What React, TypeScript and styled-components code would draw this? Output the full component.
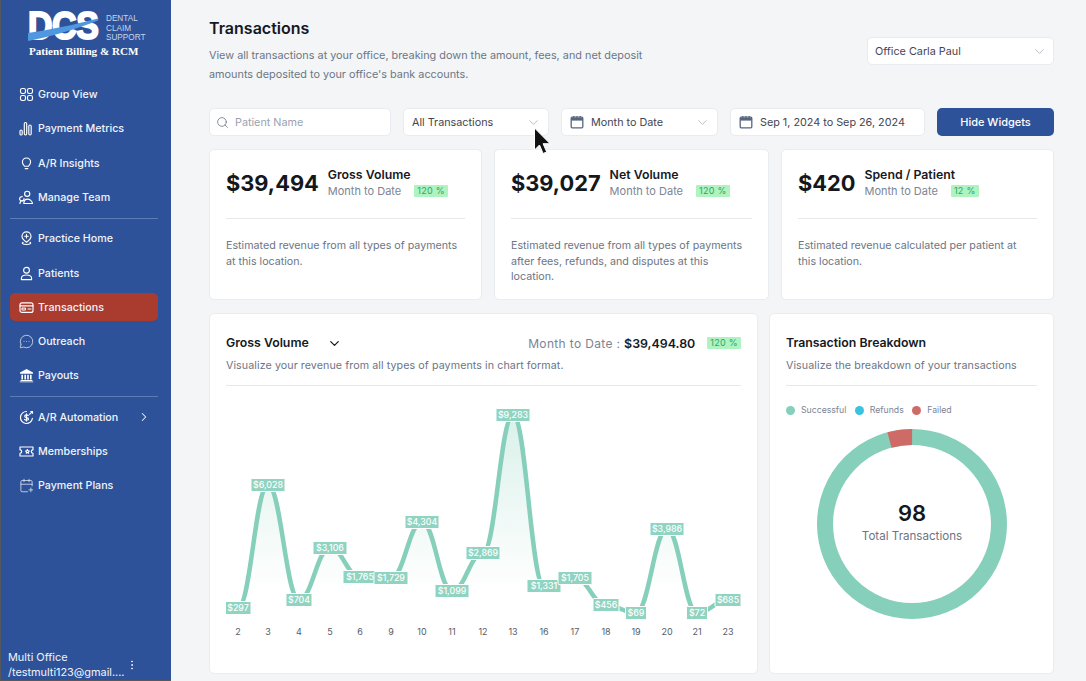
import React from 'react'
import styled, { createGlobalStyle } from 'styled-components'
import { Search, ChevronDown, ChevronRight, MessageCircleMore, CalendarPlus, EllipsisVertical } from 'lucide-react'

const GlobalStyle = createGlobalStyle`
  html, body {
    margin: 0;
    padding: 0;
    height: 681px;
    overflow: hidden;
    font-family: Inter, "Liberation Sans", sans-serif;
    background: #f3f5f7;
  }
  * { box-sizing: border-box; }
`

const Page = styled.div`
  display: flex;
  width: 1086px;
  height: 681px;
  overflow: hidden;
  position: relative;
`
const Sidebar = styled.aside`
  width: 171px;
  flex-shrink: 0;
  height: 681px;
  display: flex;
  flex-direction: column;
  background: #2d5299;
  border-left: 1px solid #55585e;
  border-bottom: 1px solid #55585e;
  color: #fff;
  overflow: hidden;
`
const LogoBlock = styled.div`
  height: 80.4px;
  padding: 11px 0 0 27px;
`
const LogoTop = styled.div`
  display: flex;
  align-items: flex-start;
  height: 30px;
  gap: 8px;
`
const LogoMark = styled.div`
  position: relative;
  width: 70px;
  height: 30px;
`
const LogoLetters = styled.span`
  display: block;
  font-family: 'Liberation Sans', sans-serif;
  font-weight: 700;
  font-size: 39px;
  line-height: 30px;
  letter-spacing: -0.5px;
  transform: scaleX(0.87);
  transform-origin: left center;
  -webkit-text-stroke: 2px #fff;
  color: #fff;
`
const LogoSwoosh = styled.svg`
  position: absolute;
  left: 0;
  top: 0;
`
const LogoSmall = styled.div`
  font-family: 'Liberation Sans', sans-serif;
  font-size: 8.2px;
  line-height: 9.6px;
  color: #c9d5ea;
  padding-top: 3px;
`
const LogoTagline = styled.div`
  font-family: 'Liberation Serif', serif;
  font-weight: 700;
  font-size: 11.1px;
  line-height: 14px;
  margin-top: 3px;
  margin-left: 1px;
  white-space: nowrap;
`
const Nav = styled.nav`
  display: flex;
  flex-direction: column;
  gap: 6px;
  padding: 0 13px 0 9px;
`
const NavItem = styled.a<{ $active?: boolean }>`
  display: flex;
  align-items: center;
  height: 28.3px;
  padding: 0 9px;
  gap: 4px;
  font-size: 10.7px;
  font-weight: 450;
  color: #f1f4fa;
  border-radius: 5px;
  background: ${(p) => (p.$active ? '#a93b2f' : 'transparent')};
  svg {
    flex-shrink: 0;
  }
`
const NavLabel = styled.span`
  flex: 1;
`
const NavArrow = styled.span`
  display: flex;
  margin-right: -2px;
`
const NavDivider = styled.div`
  height: 1px;
  background: #5d7cb5;
`
const SideFooter = styled.div`
  margin-top: auto;
  display: flex;
  align-items: center;
  padding: 2px 0 0 7px;
  height: 32px;
  font-size: 10.9px;
  line-height: 15px;
  color: #f1f4fa;
  gap: 0;
`
const FooterText = styled.div`
  width: 118px;
  white-space: nowrap;
`
const Main = styled.main`
  flex: 1;
  padding: 18px 32px 0 38px;
  background: #f3f5f7;
`
const Header = styled.header`
  display: flex;
  justify-content: space-between;
  align-items: flex-start;
`
const Title = styled.h1`
  margin: 0;
  font-size: 16px;
  line-height: 20px;
  font-weight: 600;
  color: #16191f;
`
const Description = styled.p`
  margin: 8px 0 0;
  font-size: 10.85px;
  line-height: 18.5px;
  color: #6c7585;
  width: 460px;
`
const Control = styled.div`
  display: flex;
  align-items: center;
  height: 28px;
  background: #fff;
  border: 1px solid #e8ebef;
  border-radius: 5px;
  padding: 0 7px 0 8px;
  font-size: 10.8px;
  color: #3f4652;
  gap: 7px;
  white-space: nowrap;
`
const OfficeSelect = styled(Control)`
  width: 187px;
  margin-top: 19px;
  padding: 0 6px 0 7px;
`
const SearchField = styled(Control)`
  padding-left: 6px;
  gap: 6px;
`
const ControlText = styled.span<{ $muted?: boolean }>`
  flex: 1;
  color: ${(p) => (p.$muted ? '#9ba2b0' : '#3f4652')};
`
const Toolbar = styled.div`
  display: grid;
  grid-template-columns: 182px 146px 157px 195px 117px;
  gap: 12px;
  margin-top: 25px;
`
const WidgetButton = styled.button`
  height: 28px;
  border: 0;
  border-radius: 5px;
  background: #2d5299;
  color: #fff;
  font: 500 11px Inter, sans-serif;
`
const StatGrid = styled.section`
  display: grid;
  grid-template-columns: 273px 275px 273px;
  gap: 12px;
  margin-top: 13px;
`
const Card = styled.div`
  background: #fff;
  border: 1px solid #e9ecf0;
  border-radius: 5px;
`
const StatCard = styled(Card)`
  height: 151px;
  padding: 0 16px;
`
const StatTop = styled.div`
  display: flex;
  align-items: center;
  gap: 9px;
  height: 69px;
  padding-bottom: 2px;
  border-bottom: 1px solid #e6e8ec;
`
const StatValue = styled.div`
  font-size: 21.8px;
  font-weight: 700;
  color: #14171c;
  line-height: 28px;
`
const StatInfo = styled.div`
  margin-top: -2px;
`
const StatLabel = styled.div`
  font-size: 12.3px;
  font-weight: 600;
  color: #16191f;
  line-height: 16px;
`
const StatMeta = styled.div`
  display: flex;
  align-items: center;
  gap: 13px;
  font-size: 11px;
  line-height: 14px;
  margin-top: 1px;
  color: #7c8494;
`
const Badge = styled.span`
  display: inline-block;
  background: #aef3c0;
  color: #2aa76a;
  font-size: 9px;
  line-height: 12px;
  height: 12px;
  padding: 0 3px;
  border-radius: 1px;
  letter-spacing: 0.3px;
`
const StatText = styled.p`
  margin: 19px 0 0;
  font-size: 10.7px;
  line-height: 15.7px;
  color: #6c7585;
`
const BottomGrid = styled.section`
  display: grid;
  grid-template-columns: 549px 285px;
  gap: 11px;
  margin-top: 13px;
`
const PanelCard = styled(Card)`
  height: 361px;
  padding: 20px 16px 0;
`
const PanelHead = styled.div`
  display: flex;
  align-items: center;
  height: 18px;
`
const PanelTitle = styled.h2`
  margin: 0;
  font-size: 12.3px;
  line-height: 18px;
  font-weight: 600;
  color: #16191f;
`
const TitleChevron = styled.span`
  display: flex;
  margin-left: 18px;
  color: #16191f;
`
const PanelRight = styled.div`
  margin-left: auto;
  display: flex;
  align-items: center;
  font-size: 12px;
  letter-spacing: 0.35px;
  color: #7c8494;
  gap: 12px;
`
const Total = styled.b`
  font-weight: 600;
  letter-spacing: 0;
  color: #16191f;
  font-size: 12.4px;
`
const PanelSub = styled.p`
  margin: 6px 0 0;
  padding-bottom: 12px;
  font-size: 10.7px;
  line-height: 15px;
  letter-spacing: 0.08px;
  color: #6c7585;
  border-bottom: 1px solid #e6e8ec;
`
const ChartSvg = styled.svg`
  display: block;
  margin-top: 4px;
`
const Legend = styled.div`
  display: flex;
  align-items: center;
  margin-top: 19px;
  font-size: 8.7px;
  line-height: 11px;
  color: #7c8494;
`
const LegendItem = styled.div`
  display: flex;
  align-items: center;
  gap: 6px;
  margin-right: 8.5px;
`
const LegendDot = styled.i<{ $color: string }>`
  display: block;
  width: 9px;
  height: 9px;
  border-radius: 50%;
  background: ${(p) => p.$color};
`
const DonutWrap = styled.div`
  position: relative;
  width: 190px;
  height: 190px;
  margin: 13px 0 0 31px;
`
const DonutCenter = styled.div`
  position: absolute;
  inset: 0;
  display: flex;
  flex-direction: column;
  align-items: center;
  justify-content: center;
  padding-bottom: 5px;
`
const DonutNumber = styled.div`
  font-size: 22px;
  font-weight: 600;
  line-height: 28px;
  color: #14171c;
`
const DonutLabel = styled.div`
  font-size: 11.6px;
  line-height: 16px;
  margin-top: 1px;
  color: #6c7585;
`
const Cursor = styled.svg`
  position: absolute;
  left: 533px;
  top: 127px;
`

const Ico: React.FC<{ children: React.ReactNode }> = ({ children }) => (
  <svg width="15" height="15" viewBox="0 0 15 15" fill="none" stroke="#fff" strokeWidth="1.15" strokeLinecap="round" strokeLinejoin="round">
    {children}
  </svg>
)

const GridIcon = () => (
  <Ico>
    <rect x="1.5" y="1.5" width="5" height="5" rx="1.7" />
    <rect x="8.5" y="1.5" width="5" height="5" rx="1.7" />
    <rect x="1.5" y="8.5" width="5" height="5" rx="1.7" />
    <rect x="8.5" y="8.5" width="5" height="5" rx="1.7" />
  </Ico>
)
const BarsIcon = () => (
  <Ico>
    <rect x="1" y="9" width="2.2" height="5" rx="1.1" />
    <rect x="5.3" y="1.5" width="2.4" height="12.5" rx="1.2" />
    <rect x="9.8" y="4" width="2.4" height="10" rx="1.2" />
  </Ico>
)
const BulbIcon = () => (
  <Ico>
    <path d="M5.4 10.2C4.4 9.2 3.4 8 3.4 6.1a4.1 4.1 0 0 1 8.2 0c0 1.9-1 3.1-2 4.1z" />
    <path d="M6.2 12.6h2.6" />
  </Ico>
)
const TeamIcon = () => (
  <Ico>
    <circle cx="8.2" cy="3.8" r="2.6" />
    <path d="M5 8.6a2.2 2.2 0 1 1-1.6-1.9" />
    <path d="M1 13.5c0-1.8 1-3 2.8-3M4.8 13.5c0-2.6 1.5-4.4 3.7-4.4s4.8 1.8 5 4.4z" />
  </Ico>
)
const PinIcon = () => (
  <Ico>
    <path d="M7.5 11.2C5 9.6 3 7.8 3 5.3a4.5 4.5 0 0 1 9 0c0 2.5-2 4.3-4.5 5.9z" />
    <path d="M7.5 3.4v3.6M5.7 5.2h3.6" />
    <path d="M4 11.4c-1.4.6-.8 2.1 3.5 2.1s4.9-1.5 3.5-2.1" />
  </Ico>
)
const PatientIcon = () => (
  <Ico>
    <circle cx="7.5" cy="4.2" r="2.9" />
    <path d="M2.4 13.6v-1.2c0-2 1.8-3.4 5.1-3.4s5.1 1.4 5.1 3.4v1.2z" />
  </Ico>
)
const CardIcon = () => (
  <Ico>
    <rect x="1" y="2.8" width="13" height="9.6" rx="2" />
    <path d="M1 5.8h13" />
    <rect x="3" y="8" width="3.4" height="2" rx=".5" />
    <path d="M9 9h3" />
  </Ico>
)
const BankIcon = () => (
  <svg width="15" height="15" viewBox="0 0 15 15" fill="#fff">
    <path d="M7.5 1 14 4.6v1.2H1V4.6z" />
    <path d="M2.4 6.8h1.6v4.6H2.4zM5.4 6.8H7v4.6H5.4zM8.2 6.8h1.6v4.6H8.2zM11 6.8h1.6v4.6H11z" />
    <path d="M1.6 12.1h11.8v1H1.6zM.8 13.4h13.4v.9H.8z" />
  </svg>
)
const DollarIcon = () => (
  <Ico>
    <path d="M13.4 8.4A6 6 0 1 1 7.5 1.5" />
    <path d="M9.3 5.6c-.5-.8-3.6-1.2-3.6.6s3.8 1 3.8 2.8-3.4 1.4-4 .4M7.5 3.9v7.2" />
    <path d="M10.6 4.4l2.8-2.9M11.8 1.5h1.7v1.7" />
  </Ico>
)
const TicketIcon = () => (
  <Ico>
    <path d="M1 3h13v2.8a1.7 1.7 0 0 0 0 3.4V12H1V9.2a1.7 1.7 0 0 0 0-3.4z" />
    <path d="M8.4 5.6l.6 1.2 1.3.2-.9.9.2 1.3-1.2-.6-1.1.6.2-1.3-.9-.9 1.2-.2z" />
  </Ico>
)

const CalendarIcon = () => (
  <svg width="14" height="14" viewBox="0 0 14 14" fill="none">
    <rect x="1.2" y="2.2" width="11.6" height="10.6" rx="1" stroke="#56667f" strokeWidth="1.3" />
    <path d="M1.2 3h11.6v2.6H1.2z" fill="#56667f" />
    <path d="M3.8 1v2.4M7 1v2.4M10.2 1v2.4" stroke="#56667f" strokeWidth="1.2" />
  </svg>
)

const Chevron = () => <ChevronDown size={15} color="#b3b9c4" strokeWidth={1.5} />

const navTop = [
  { label: 'Group View', icon: <GridIcon /> },
  { label: 'Payment Metrics', icon: <BarsIcon /> },
  { label: 'A/R Insights', icon: <BulbIcon /> },
  { label: 'Manage Team', icon: <TeamIcon /> },
]
const navMiddle = [
  { label: 'Practice Home', icon: <PinIcon /> },
  { label: 'Patients', icon: <PatientIcon /> },
  { label: 'Transactions', icon: <CardIcon />, active: true },
  { label: 'Outreach', icon: <MessageCircleMore size={15} strokeWidth={1.15} /> },
  { label: 'Payouts', icon: <BankIcon /> },
]
const navBottom = [
  { label: 'Memberships', icon: <TicketIcon /> },
  { label: 'Payment Plans', icon: <CalendarPlus size={15} strokeWidth={1.15} /> },
]

const stats = [
  {
    value: '$39,494',
    label: 'Gross Volume',
    badge: '120 %',
    text: 'Estimated revenue from all types of payments at this location.',
  },
  {
    value: '$39,027',
    label: 'Net Volume',
    badge: '120 %',
    text: 'Estimated revenue from all types of payments after fees, refunds, and disputes at this location.',
  },
  {
    value: '$420',
    label: 'Spend / Patient',
    badge: '12 %',
    text: 'Estimated revenue calculated per patient at this location.',
  },
]

// page coordinates, the svg viewBox below is offset to match
const points = [
  { d: '2', x: 238, y: 608, v: '$297' },
  { d: '3', x: 268, y: 485, v: '$6,028' },
  { d: '4', x: 299, y: 600, v: '$704' },
  { d: '5', x: 330, y: 548, v: '$3,106' },
  { d: '6', x: 360, y: 577, v: '$1,765' },
  { d: '9', x: 391, y: 578, v: '$1,729' },
  { d: '10', x: 422, y: 522, v: '$4,304' },
  { d: '11', x: 452, y: 591, v: '$1,099' },
  { d: '12', x: 483, y: 553, v: '$2,869' },
  { d: '13', x: 513, y: 415, v: '$9,283' },
  { d: '16', x: 544, y: 586, v: '$1,331' },
  { d: '17', x: 575, y: 578, v: '$1,705' },
  { d: '18', x: 606, y: 605, v: '$456' },
  { d: '19', x: 636, y: 613, v: '$69' },
  { d: '20', x: 667, y: 529, v: '$3,986' },
  { d: '21', x: 697, y: 613, v: '$72' },
  { d: '23', x: 728, y: 600, v: '$685' },
]

const linePath = () => {
  let d = `M${points[0].x} ${points[0].y}`
  for (let i = 1; i < points.length; i++) {
    const a = points[i - 1]
    const b = points[i]
    const mx = (b.x - a.x) * 0.42
    d += ` C${a.x + mx} ${a.y} ${b.x - mx} ${b.y} ${b.x} ${b.y}`
  }
  return d
}

const labelWidth = (v: string) => (v.length >= 6 ? 34 : v.length === 4 ? 26 : 21)

const RevenueChart = () => {
  const line = linePath()
  return (
    <ChartSvg width="516" height="250" viewBox="226 390 516 250">
      <defs>
        <linearGradient id="area" x1="0" y1="0" x2="0" y2="1">
          <stop offset="0" stopColor="#86cfbb" stopOpacity="0.3" />
          <stop offset="0.9" stopColor="#86cfbb" stopOpacity="0" />
        </linearGradient>
      </defs>
      <path d={`${line} L728 612 L238 612 Z`} fill="url(#area)" />
      <path d={line} fill="none" stroke="#86cfbb" strokeWidth="4.5" />
      {points.map((p) => {
        const w = labelWidth(p.v)
        return (
          <g key={p.d}>
            <rect x={p.x - w / 2} y={p.y - 6.5} width={w} height={13} rx="1" fill="#8fd3c1" stroke="#fff" strokeWidth="1" />
            <text x={p.x} y={p.y + 3.3} textAnchor="middle" fontSize="8.8" fontWeight="500" fontFamily="Inter, sans-serif" fill="#fff">
              {p.v}
            </text>
          </g>
        )
      })}
      {points.map((p) => (
        <text key={p.d} x={p.x} y={635} textAnchor="middle" fontSize="9" fontFamily="Inter, sans-serif" fill="#565c66">
          {p.d}
        </text>
      ))}
    </ChartSvg>
  )
}

const Donut = () => {
  const r = 87
  const c = 2 * Math.PI * r
  const failed = c * 0.042
  return (
    <svg width="190" height="190" viewBox="0 0 190 190">
      <circle cx="95" cy="95" r={r} fill="none" stroke="#86cfbb" strokeWidth="16" />
      <circle
        cx="95"
        cy="95"
        r={r}
        fill="none"
        stroke="#cf6b67"
        strokeWidth="16"
        strokeDasharray={`${failed} ${c - failed}`}
        transform={`rotate(${-90 - 15} 95 95)`}
      />
    </svg>
  )
}

const NavRow: React.FC<{ label: string; icon: React.ReactNode; active?: boolean; arrow?: boolean }> = ({ label, icon, active, arrow }) => (
  <NavItem $active={active}>
    {icon}
    <NavLabel>{label}</NavLabel>
    {arrow && (
      <NavArrow>
        <ChevronRight size={14} strokeWidth={1.8} />
      </NavArrow>
    )}
  </NavItem>
)

export default function App() {
  return (
    <Page>
      <GlobalStyle />
      <Sidebar>
        <LogoBlock>
          <LogoTop>
            <LogoMark>
              <LogoLetters>DCS</LogoLetters>
              <LogoSwoosh width="70" height="30" viewBox="0 0 70 30">
                <path d="M0 30C22 26 48 18 70 9.5V7.5C46 14 20 19 0 22z" fill="#4f97de" />
              </LogoSwoosh>
            </LogoMark>
            <LogoSmall>
              DENTAL
              <br />
              CLAIM
              <br />
              SUPPORT
            </LogoSmall>
          </LogoTop>
          <LogoTagline>Patient Billing &amp; RCM</LogoTagline>
        </LogoBlock>
        <Nav>
          {navTop.map((n) => (
            <NavRow key={n.label} {...n} />
          ))}
          <NavDivider />
          {navMiddle.map((n) => (
            <NavRow key={n.label} {...n} />
          ))}
          <NavDivider />
          <NavRow label="A/R Automation" icon={<DollarIcon />} arrow />
          {navBottom.map((n) => (
            <NavRow key={n.label} {...n} />
          ))}
        </Nav>
        <SideFooter>
          <FooterText>
            Multi Office
            <br />
            /testmulti123@gmail....
          </FooterText>
          <EllipsisVertical size={12} strokeWidth={2} />
        </SideFooter>
      </Sidebar>
      <Main>
        <Header>
          <div>
            <Title>Transactions</Title>
            <Description>
              View all transactions at your office, breaking down the amount, fees, and net deposit amounts deposited to your office's bank accounts.
            </Description>
          </div>
          <OfficeSelect>
            <ControlText>Office Carla Paul</ControlText>
            <Chevron />
          </OfficeSelect>
        </Header>
        <Toolbar>
          <SearchField>
            <Search size={13} color="#6f7683" strokeWidth={1.5} />
            <ControlText $muted>Patient Name</ControlText>
          </SearchField>
          <Control>
            <ControlText>All Transactions</ControlText>
            <Chevron />
          </Control>
          <Control>
            <CalendarIcon />
            <ControlText>Month to Date</ControlText>
            <Chevron />
          </Control>
          <Control>
            <CalendarIcon />
            <ControlText>Sep 1, 2024 to Sep 26, 2024</ControlText>
          </Control>
          <WidgetButton>Hide Widgets</WidgetButton>
        </Toolbar>
        <StatGrid>
          {stats.map((s) => (
            <StatCard key={s.label}>
              <StatTop>
                <StatValue>{s.value}</StatValue>
                <StatInfo>
                  <StatLabel>{s.label}</StatLabel>
                  <StatMeta>
                    Month to Date
                    <Badge>{s.badge}</Badge>
                  </StatMeta>
                </StatInfo>
              </StatTop>
              <StatText>{s.text}</StatText>
            </StatCard>
          ))}
        </StatGrid>
        <BottomGrid>
          <PanelCard>
            <PanelHead>
              <PanelTitle>Gross Volume</PanelTitle>
              <TitleChevron>
                <ChevronDown size={15} strokeWidth={2} />
              </TitleChevron>
              <PanelRight>
                <span>
                  Month to Date : <Total>$39,494.80</Total>
                </span>
                <Badge>120 %</Badge>
              </PanelRight>
            </PanelHead>
            <PanelSub>Visualize your revenue from all types of payments in chart format.</PanelSub>
            <RevenueChart />
          </PanelCard>
          <PanelCard>
            <PanelHead>
              <PanelTitle>Transaction Breakdown</PanelTitle>
            </PanelHead>
            <PanelSub>Visualize the breakdown of your transactions</PanelSub>
            <Legend>
              <LegendItem>
                <LegendDot $color="#86cfbb" />
                Successful
              </LegendItem>
              <LegendItem>
                <LegendDot $color="#38c3e0" />
                Refunds
              </LegendItem>
              <LegendItem>
                <LegendDot $color="#cf6b67" />
                Failed
              </LegendItem>
            </Legend>
            <DonutWrap>
              <Donut />
              <DonutCenter>
                <DonutNumber>98</DonutNumber>
                <DonutLabel>Total Transactions</DonutLabel>
              </DonutCenter>
            </DonutWrap>
          </PanelCard>
        </BottomGrid>
      </Main>
      <Cursor width="18" height="29" viewBox="0 0 18 29">
        <path d="M1.5 1v22l5-5 3.6 8.5 3.6-1.6-3.6-8.2h7z" fill="#111" stroke="#fff" strokeWidth="1" />
      </Cursor>
    </Page>
  )
}
